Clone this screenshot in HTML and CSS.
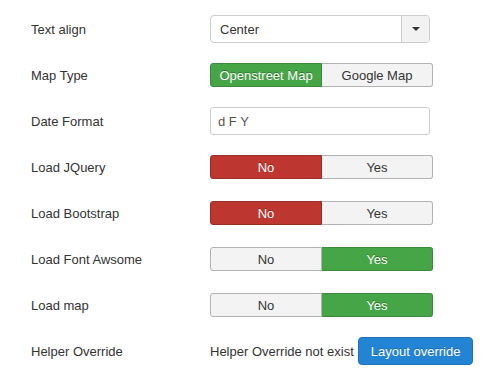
FILE: index.html
```html
<!DOCTYPE html>
<html lang="en">
<head>
  <title>Module options</title>
  <link rel="stylesheet" href="styles.css">
</head>
<body>

  <div class="form">
    <div class="row">
      <div class="label">Text align</div>
      <div class="select">
        <span class="select-value">Center</span>
        <span class="select-arrow"><i class="caret"></i></span>
      </div>
    </div>

    <div class="row">
      <div class="label">Map Type</div>
      <div class="btn-group">
        <span class="btn active-green">Openstreet Map</span>
        <span class="btn">Google Map</span>
      </div>
    </div>

    <div class="row">
      <div class="label">Date Format</div>
      <div class="input">d F Y</div>
    </div>

    <div class="row">
      <div class="label">Load JQuery</div>
      <div class="btn-group">
        <span class="btn active-red">No</span>
        <span class="btn">Yes</span>
      </div>
    </div>

    <div class="row">
      <div class="label">Load Bootstrap</div>
      <div class="btn-group">
        <span class="btn active-red">No</span>
        <span class="btn">Yes</span>
      </div>
    </div>

    <div class="row">
      <div class="label">Load Font Awsome</div>
      <div class="btn-group">
        <span class="btn">No</span>
        <span class="btn active-green">Yes</span>
      </div>
    </div>

    <div class="row">
      <div class="label">Load map</div>
      <div class="btn-group">
        <span class="btn">No</span>
        <span class="btn active-green">Yes</span>
      </div>
    </div>

    <div class="row">
      <div class="label">Helper Override</div>
      <div class="helper">
        <span>Helper Override not exist</span>
        <span class="btn-primary">Layout override</span>
      </div>
    </div>
  </div>

</body>
</html>
```

FILE: styles.css
```css
body {
  margin: 0;
  background: #fff;
  font-family: "Liberation Sans", Arial, sans-serif;
  font-size: 13px;
  color: #333;
}

.form {
  padding: 6px 0 0 31px;
}

.row {
  display: flex;
  align-items: center;
  height: 46px;
}

.label {
  width: 179px;
}

.select {
  display: flex;
  width: 220px;
  height: 28px;
  box-sizing: border-box;
  border: 1px solid #ccc;
  border-radius: 4px;
  overflow: hidden;
}

.select-value {
  flex: 1;
  display: flex;
  align-items: center;
  padding-left: 9px;
}

.select-arrow {
  width: 27px;
  display: flex;
  justify-content: center;
  align-items: center;
  background: #f2f2f2;
  border-left: 1px solid #ccc;
}

.caret {
  width: 0;
  height: 0;
  border-left: 4px solid transparent;
  border-right: 4px solid transparent;
  border-top: 4px solid #333;
}

.input {
  display: flex;
  align-items: center;
  width: 220px;
  height: 28px;
  box-sizing: border-box;
  padding-left: 7px;
  border: 1px solid #ccc;
  border-radius: 3px;
  color: #555;
}

.btn-group {
  display: flex;
  width: 223px;
  height: 24px;
}

.btn {
  flex: 1;
  display: flex;
  justify-content: center;
  align-items: center;
  background: #f3f3f3;
  border: 1px solid #b3b3b3;
  color: #333;
}

.btn:first-child {
  border-radius: 3px 0 0 3px;
}

.btn:last-child {
  border-left: none;
  border-radius: 0 3px 3px 0;
}

.active-green {
  background: #46a546;
  border-color: #3b8a3b;
  color: #fff;
  text-shadow: 0 -1px 0 rgba(0, 0, 0, 0.3);
}

.active-red {
  background: #bd362f;
  border-color: #9e2d27;
  color: #fff;
  text-shadow: 0 -1px 0 rgba(0, 0, 0, 0.3);
}

.helper {
  display: flex;
  align-items: center;
  gap: 4px;
}

.btn-primary {
  display: flex;
  align-items: center;
  height: 28px;
  box-sizing: border-box;
  padding: 0 12px;
  background: #2384d3;
  border: 1px solid #1f73b8;
  border-radius: 4px;
  color: #fff;
  text-shadow: 0 -1px 0 rgba(0, 0, 0, 0.2);
}
```
